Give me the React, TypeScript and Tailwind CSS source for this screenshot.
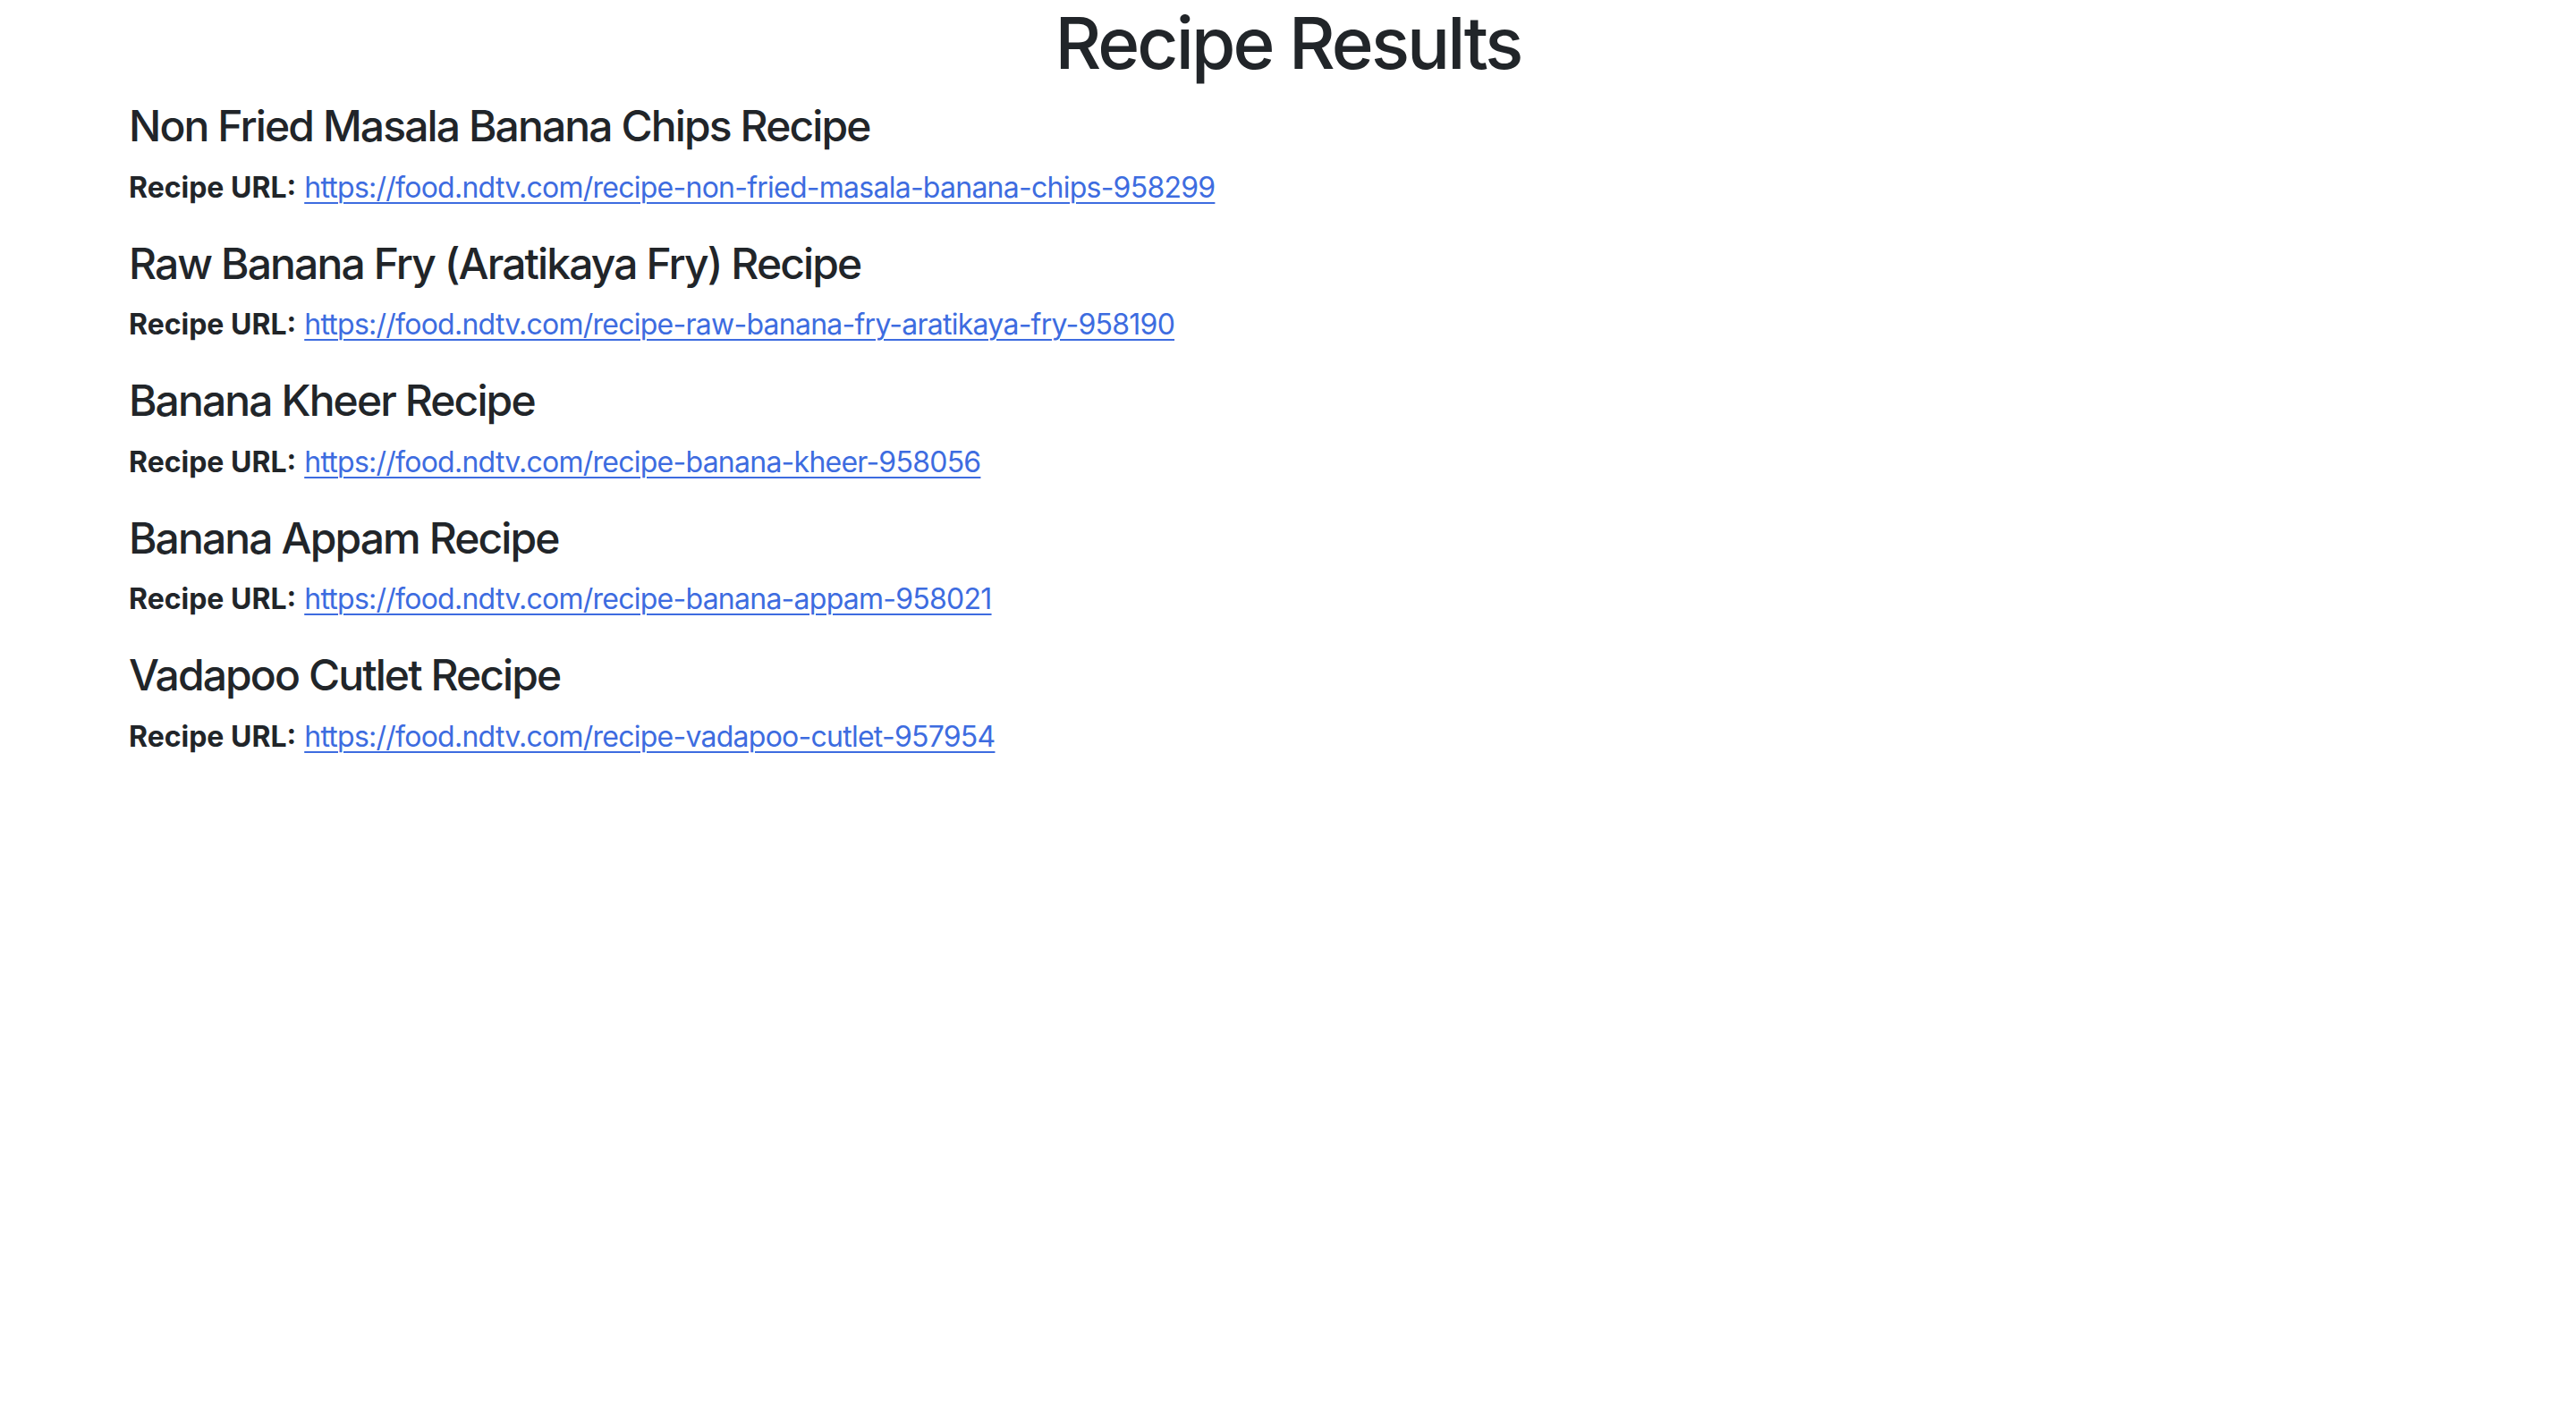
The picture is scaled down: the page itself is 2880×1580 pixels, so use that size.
import React from "react";

const recipes = [
  { title: "Non Fried Masala Banana Chips Recipe", url: "https://food.ndtv.com/recipe-non-fried-masala-banana-chips-958299" },
  { title: "Raw Banana Fry (Aratikaya Fry) Recipe", url: "https://food.ndtv.com/recipe-raw-banana-fry-aratikaya-fry-958190" },
  { title: "Banana Kheer Recipe", url: "https://food.ndtv.com/recipe-banana-kheer-958056" },
  { title: "Banana Appam Recipe", url: "https://food.ndtv.com/recipe-banana-appam-958021" },
  { title: "Vadapoo Cutlet Recipe", url: "https://food.ndtv.com/recipe-vadapoo-cutlet-957954" },
];

export default function App() {
  return (
    <div
      className="min-h-[1580px] bg-white text-[#212529]"
      style={{ fontFamily: "Inter, 'Noto Sans', 'Liberation Sans', sans-serif" }}
    >
      <div className="mx-auto max-w-[2640px] px-[24px]">
        <h1 className="mb-[16px] text-center text-[80px] font-medium leading-[96px] tracking-[-2.9px]">
          Recipe Results
        </h1>
        {recipes.map((r) => (
          <div key={r.url}>
            <h4 className="mb-[16px] text-[48px] font-medium leading-[57.6px] tracking-[-1.9px]">{r.title}</h4>
            <p className="mb-[32px] text-[32px] leading-[48px]">
              <strong className="font-bold">Recipe URL:</strong>{" "}
              <a
                href={r.url}
                className="text-[#3d6ce0] tracking-[-0.75px] underline decoration-[2px] underline-offset-[5px]"
              >
                {r.url}
              </a>
            </p>
          </div>
        ))}
      </div>
    </div>
  );
}
